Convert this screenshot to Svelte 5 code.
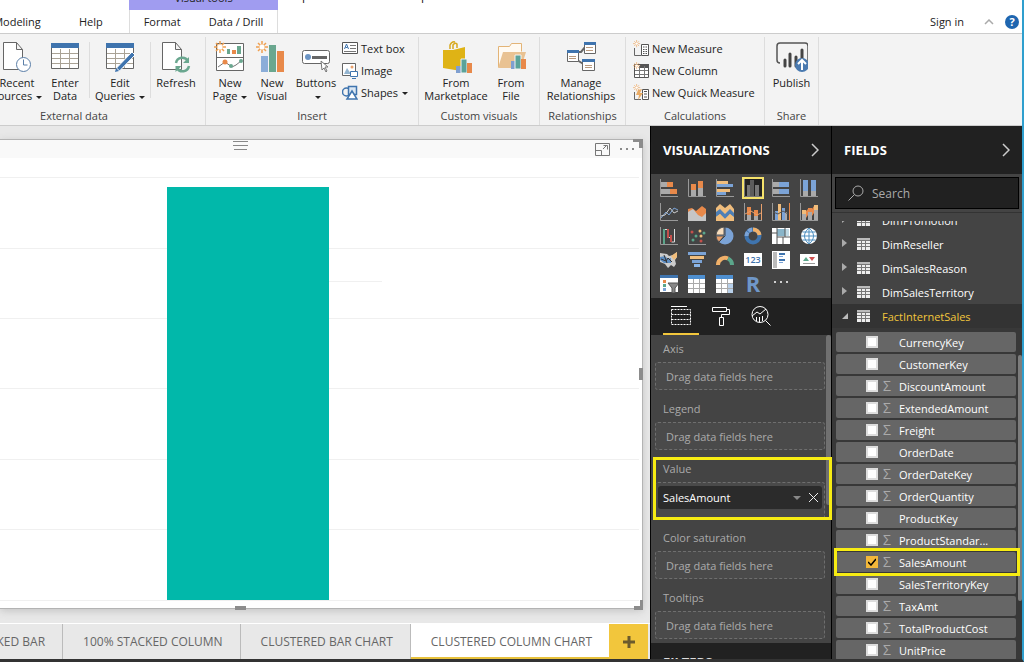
<script>
  let search = $state("");
  let activePage = $state("CLUSTERED COLUMN CHART");
  let activeVisual = $state("clusteredColumn");

  const pages = ["100% STACKED BAR", "100% STACKED COLUMN", "CLUSTERED BAR CHART", "CLUSTERED COLUMN CHART"];
  const tables = ["DimPromotion", "DimReseller", "DimSalesReason", "DimSalesTerritory"];

  let fields = $state([
    { name: "CurrencyKey", sum: false, checked: false },
    { name: "CustomerKey", sum: false, checked: false },
    { name: "DiscountAmount", sum: true, checked: false },
    { name: "ExtendedAmount", sum: true, checked: false },
    { name: "Freight", sum: true, checked: false },
    { name: "OrderDate", sum: false, checked: false },
    { name: "OrderDateKey", sum: true, checked: false },
    { name: "OrderQuantity", sum: true, checked: false },
    { name: "ProductKey", sum: false, checked: false },
    { name: "ProductStandar...", sum: true, checked: false },
    { name: "SalesAmount", sum: true, checked: true },
    { name: "SalesTerritoryKey", sum: false, checked: false },
    { name: "TaxAmt", sum: true, checked: false },
    { name: "TotalProductCost", sum: true, checked: false },
    { name: "UnitPrice", sum: true, checked: false },
  ]);

  const wells = [
    { label: "Axis" },
    { label: "Legend" },
    { label: "Value", field: "SalesAmount" },
    { label: "Color saturation" },
    { label: "Tooltips" },
  ];

  const axis = '<path d="M.5 0V17.500H18" fill="none" stroke="#999"/>';
  const o = "#e8894a";
  const b = "#7ba3d6";
  const g = "#aaa";
  const y = "#f0bd7c";
  const r = (x, y, w, h, c) => `<rect x="${x}" y="${y}" width="${w}" height="${h}" fill="${c}"/>`;

  // every visual is drawn on an 18 x 18 grid
  const visuals = {
    stackedBar: axis + r(1, 3, 6, 5, g) + r(7, 3, 6, 5, o) + r(1, 10, 9, 5, g) + r(10, 10, 7, 5, o),
    stackedColumn: axis + r(3, 5, 5, 6, o) + r(3, 11, 5, 6, g) + r(10, 2, 5, 7, o) + r(10, 9, 5, 8, g),
    clusteredBar: axis + r(1, 2, 11, 3, y) + r(1, 5, 16, 3, b) + r(1, 10, 13, 3, y) + r(1, 13, 9, 3, b),
    clusteredColumn: '<path d="M.5 0V17.500H18" fill="none" stroke="#777"/>' + r(3, 6, 3, 11, "#777") + r(6, 1, 4, 16, "#5c5c5c") + r(11, 6, 4, 11, "#777"),
    fullBar: axis + r(1, 3, 6, 5, g) + r(7, 3, 10, 5, b) + r(1, 10, 6, 5, g) + r(7, 10, 10, 5, b),
    fullColumn: axis + r(3, 1, 5, 11, b) + r(3, 12, 5, 5, g) + r(11, 1, 5, 11, b) + r(11, 12, 5, 5, g),
    line: axis + '<path d="M1 15 6 9l3 3 5-7 4 2" fill="none" stroke="#7ba3d6"/><path d="M1 13 5 12 10 5l4 5 4-2" fill="none" stroke="#ccc"/>',
    area: '<path d="M0 6 4 5l4 3 6-5 4 3v12H0z" fill="#e8894a"/><path d="M0 9 5 6l5 6 4 2 4-4v8H0z" fill="#c6c6c6"/>',
    stackedArea: '<path d="M0 5 4 1l5 4 5-4 4 5v12H0z" fill="#f0bd7c"/><path d="m0 9 4-3 5 5 5-5 4 4v4l-4-3-5 5-5-5-4 3z" fill="#4e7fb5"/><path d="m0 14 4-3 5 5 5-5 4 4v3H0z" fill="#f0bd7c"/>',
    lineStacked: axis + r(3, 4, 4, 8, o) + r(3, 12, 4, 5, g) + r(10, 7, 4, 6, o) + r(10, 13, 4, 4, g) + '<path d="m1 11 6-3 6 4 4-2M17.500 1v16" fill="none" stroke="#e8a06c"/>',
    lineClustered: axis + r(3, 8, 3, 9, b) + r(6, 1, 3, 16, y) + r(10, 5, 3, 12, b) + r(13, 9, 2, 8, g) + '<path d="m1 9 5 2 5-3 5 3" fill="none" stroke="#555"/><path d="M17.500 0v17" stroke="#e8894a"/>',
    ribbon: axis + r(2, 7, 4, 10, g) + r(2, 7, 4, 4, y) + r(8, 5, 4, 12, g) + r(8, 5, 4, 4, o) + r(14, 2, 4, 15, g) + r(14, 2, 4, 5, y) + '<path d="m6 8 2-2v6l-2 3zM12 6l2-3v7l-2 3z" fill="#e8894a"/>',
    waterfall: axis + '<path d="M4.500 17V2.500H8v8h3.500V15h3V2" fill="none" stroke="#ddd"/>' + r(3, 2, 2, 15, "#5ba68b") + r(7, 2, 2, 9, "#c5504b") + r(10, 8, 2, 7, "#c5504b"),
    scatter: axis + '<g fill="#c5504b"><circle cx="4" cy="5" r="1.500"/><circle cx="13" cy="14" r="1.500"/></g><g fill="#5ba68b"><circle cx="8" cy="9" r="1.500"/><circle cx="16" cy="6" r="1.500"/><circle cx="5" cy="13" r="1.500"/></g><g fill="#f0bd7c"><circle cx="12" cy="4" r="1.500"/><circle cx="13" cy="9" r="1.500"/></g>',
    pie: '<circle cx="9" cy="9" r="8.500" fill="#7ba3d6"/><path d="M8 8V0A8.500 8.500 0 0 0 0 8z" fill="#f7dcbc" stroke="#555"/><path d="M8 9H0a8.500 8.500 0 0 0 3 6z" fill="#e8a06c" stroke="#555"/><path d="M9 0v9l-6 6" fill="none" stroke="#444"/>',
    donut: '<circle cx="9" cy="9" r="6.500" fill="none" stroke="#3f74ae" stroke-width="4"/><path d="M9 2.500A6.500 6.500 0 0 1 15.500 8" fill="none" stroke="#f0b069" stroke-width="4"/><path d="M2.500 9A6.500 6.500 0 0 1 9 2.500" fill="none" stroke="#7ba3d6" stroke-width="4" stroke-dasharray="4 1"/>',
    treemap: r(0, 1, 18, 16, "#fff") + r(5, 2, 8, 7, "#8ab5c9") + r(13, 2, 4, 7, "#c1dae5") + '<path d="M5 1v16M0 6h5M5 10h13M11 10v7M13 1v9" fill="none" stroke="#555"/>',
    map: '<circle cx="9" cy="9" r="8" fill="#fff"/><path d="M1 9h16M2.500 5h13M2.500 13h13M9 1v16M9 1C3 6 3 12 9 17M9 1c6 5 6 11 0 16" fill="none" stroke="#4e8fc0"/>',
    filledMap: '<path d="M0 2 7 3l2 2 4-1 4-3v5l-2 3 1 4-2 3-3-2-3 3-3-4-5-2z" fill="#ccc"/><path d="m0 6 5-1 3 3 3-1v5H4L0 9z" fill="#5d8dc2"/><path d="m11 5 6-4v5l-3 3z" fill="#f0bd7c"/><path d="m1 8 5 2 2-3 4 4M4 4l3 8" fill="none" stroke="#333"/>',
    funnel: r(0, 1, 18, 3, b) + r(2, 5, 14, 3, y) + r(4, 9, 10, 3, b) + r(6, 13, 6, 3, "#8ab5e8"),
    gauge: '<path d="M2 14a7 7 0 0 1 10-6.500" fill="none" stroke="#f0b069" stroke-width="4"/><path d="M12 7.500A7 7 0 0 1 16 14" fill="none" stroke="#5ba68b" stroke-width="4"/>',
    card: r(0, 2, 18, 13, "#fff") + '<text x="9" y="12" text-anchor="middle" font-size="9" font-weight="600" fill="#3f74ae">123</text>',
    multiCard: r(0, 0, 18, 18, "#fff") + r(1, 1, 4, 16, "#bbb") + r(7, 2, 6, 2, "#3f74ae") + r(7, 5, 4, 1, b) + r(7, 8, 6, 2, "#3f74ae") + r(7, 11, 4, 1, b),
    kpi: r(0, 3, 18, 12, "#fff") + '<path d="m3 10 3-4 3 4z" fill="#5ba68b"/><path d="m9 6h6l-3 4z" fill="#d05050"/>' + r(3, 12, 12, 1, "#999"),
    slicer: r(0, 0, 18, 17, "#fff") + r(0, 0, 18, 3, "#3f74ae") + r(3, 5, 3, 3, o) + r(3, 9, 3, 3, "#5ba68b") + r(3, 13, 3, 3, b) + '<path d="M8 8h11l-4 5v5h-3v-5z" fill="#888" stroke="#555"/>',
    table: r(0, 0, 17, 18, "#fff") + r(0, 0, 17, 4, "#4e8fd0") + '<path d="M5.500 4v14M11.500 4v14M0 8.500h17M0 13.500h17" stroke="#aaa"/>',
    matrix: r(0, 0, 17, 18, "#fff") + r(0, 0, 17, 4, "#4e8fd0") + r(11, 8, 6, 10, "#b8d0ea") + '<path d="M5.500 4v14M11.500 4v14M0 8.500h17M0 13.500h17" stroke="#aaa"/>',
    rScript: '<text x="9" y="17" text-anchor="middle" font-size="22" font-weight="700" fill="#6f97c8">R</text>',
    more: '<g fill="#fff"><circle cx="3" cy="7" r="1"/><circle cx="9" cy="7" r="1"/><circle cx="15" cy="7" r="1"/></g>',
  };

  const spark = '<path d="M6 0v12M0 6h12M2 2l8 8M10 2l-8 8" stroke="#f0a050" fill="none"/><circle cx="6" cy="6" r="2" fill="#fff"/>';
  const page = '<path d="M2.500 1.500h13l6 7v20h-19zM15.500 1.500v7h6" fill="#fff" stroke="#666"/>';
  const grid = '<path d="M2.500 2.500h27v25h-27z" fill="#fff" stroke="#666"/><path d="M3 12.500h26M3 17.500h26M3 22.500h26M11.500 8v19M20.500 8v19" stroke="#a9a295"/><path d="M2 2h28v5H2z" fill="#3f74ae"/>';
  const sparkBig = '<path d="M6 0v12M0 6h12M2 2l8 8M10 2l-8 8" stroke="#f0a050" stroke-width="1.500" fill="none"/><circle cx="6" cy="6" r="2.500" fill="#fff"/>';

  // ribbon icons, 32 x 32
  const icons = {
    recent: page + '<circle cx="22.500" cy="23.500" r="7" fill="#fff" stroke="#5b7fa8"/><path d="M22.500 18.500v5.500h4" fill="none" stroke="#5b7fa8"/>',
    enter: grid,
    edit: grid + '<path d="M12.500 27 28 11l3 3-15.500 16z" fill="#3f74ae" stroke="#fff"/><path d="m12 27-1 4 4-1z" fill="#3f74ae"/>',
    refresh: page + '<path d="M16 22a6.500 6.500 0 0 1 12-2M29 25a6.500 6.500 0 0 1-12 2" fill="none" stroke="#6aa78f" stroke-width="2.500"/><path d="M29 16v6h-6zM15.500 31v-6h6z" fill="#6aa78f"/>',
    newPage: '<path d="M2.500 2.500h27v27h-27zM2 16.500h28" fill="#fff" stroke="#666"/>' + '<path d="M13 8h3v5h-3zM23 5h4v8h-4z" fill="#6aa78f"/><path d="M18 9h4v4h-4z" fill="#e8894a"/><path d="m4 26 7-5 7 5 4-2 5-4" fill="none" stroke="#777"/><g fill="#6aa78f"><circle cx="17" cy="25" r="2"/><circle cx="27" cy="20" r="2"/></g><circle cx="11" cy="21" r="2.500" fill="#e8894a"/>' + sparkBig,
    newVisual: '<path d="M5 15h7v16H5z" fill="#8badd8"/><path d="M13 4h7v27h-7z" fill="#6aa78f"/><path d="M21 10h7v21h-7z" fill="#e8894a"/>' + sparkBig,
    buttons: '<rect x="2.500" y="9.500" width="27" height="13" rx="2" fill="#fff" stroke="#666"/><circle cx="8" cy="16" r="3" fill="#6b94c4"/><path d="M12 15h15v3H12z" fill="#666"/><path d="m21 20 1 9 2-2 2 4 1-1-2-4h3z" fill="#fff" stroke="#777"/>',
    marketplace: '<path d="M10 8V4q2-4 5-3M13 8V4q2-3 4-1v4" fill="none" stroke="#d7a91f" stroke-width="1.500"/><path d="m3 9 10 0 12-3v22l-4 2-18-3z" fill="#dfb315"/><path d="M16 25h6v7h-6z" fill="#7f9fd0"/><path d="M21 18h6v14h-6z" fill="#5ba39a" stroke="#f3f3f3"/><path d="M27 22h5v10h-5z" fill="#e8894a"/>',
    file: '<path d="M3.500 26V5.500h11l2-3h10v8" fill="#fffaf2" stroke="#e3b477"/><path d="m3 27 5-16h23l-5 16z" fill="#e9c292"/><path d="M16 20h5v8h-5z" fill="#7f9fd0"/><path d="M20 14h6v14h-6z" fill="#5ba39a" stroke="#f3f3f3"/><path d="M26 18h5v10h-5z" fill="#e8894a"/>',
    manage: '<path d="M12 11h4l5-6M12 19l8 5" fill="none" stroke="#666" stroke-width="2"/><g fill="#fff" stroke="#666"><path d="M2.500 9.500h11v11h-11z"/><path d="M19.500 1.500h11v11h-11z"/><path d="M17.500 18.500h12v11h-12z"/></g><path d="M2 9h12v3H2zM19 1h12v3H19zM17 18h13v3H17z" fill="#3f74ae"/><path d="M4 15.500h7M4 17.500h7M21 6.500h7M21 9.500h7M20 24.500h7M20 26.500h7" stroke="#b99a7e"/>',
    publish: '<path d="M4 22q-3 0-3-3V5q0-3 3-3h25q3 0 3 3v15" fill="none" stroke="#555" stroke-width="1.500"/><path d="M9 19v6M14 13v12M20 16v9M26 9v10" stroke="#444" stroke-width="3" stroke-linecap="round"/><circle cx="26" cy="24" r="7" fill="#4a7ab0"/><path d="M26 29v-9M22 23l4-4 4 4" fill="none" stroke="#fff" stroke-width="2"/>',
  };

  // ribbon icons, 16 x 17
  const smallIcons = {
    textBox: '<path d="M.500 2.500h15v11H.500z" fill="#fff" stroke="#555"/><path d="m2.500 9 2-5 2 5M3.500 7.500h2" fill="none" stroke="#3f74ae"/><path d="M8 5.500h6M8 8.500h6M2 11.500h12" stroke="#777"/>',
    image: '<path d="M.500 1.500h13v12H.500z" fill="#fff" stroke="#666"/><path d="m2 12 3-6 4 6z" fill="#93b4cf"/><circle cx="10" cy="5" r="1.500" fill="#e8a06c"/><path d="M8.500 9.500h7v5h-7zM10 16.500h4" fill="#fff" stroke="#3f74ae"/>',
    shapes: '<circle cx="4.500" cy="8" r="4" fill="none" stroke="#3f74ae" stroke-width="1.500"/><path d="M6.500 2.500h8v8h-8z" fill="#dbe7f3" stroke="#3f74ae" stroke-width="1.500"/><path d="m10 7 5 8H5z" fill="#fff" stroke="#3f74ae" stroke-width="1.500"/>',
    measure: '<path d="M1.500 8v7.500H8" fill="none" stroke="#666"/><path d="M8.500 4.500h7v11h-7z" fill="#fff" stroke="#555"/><path d="M10 7h4M10 9.500h4M10 11.500h4M10 13.500h4" stroke="#555" stroke-dasharray="1 .500"/><g transform="scale(.600)">' + spark + "</g>",
    column: '<path d="M1.500 2.500h14v13h-14z" fill="#fff" stroke="#555"/><path d="M7 2h9v4H7z" fill="#555"/><path d="M6.500 4v11M11.500 4v11M2 8.500h13M2 12.500h13" stroke="#777"/><g transform="scale(.600)">' + spark + "</g>",
    quick: '<path d="M1.500 8v7.500H8" fill="none" stroke="#666"/><path d="M9.500 5.500h6v10h-6z" fill="#fff" stroke="#555"/><path d="M11 7.500h3M11 10h3M11 13h3" stroke="#555"/><path d="m5 6 4-1-2 4h3l-5 7 1-5H3z" fill="#e9ab65"/><g transform="scale(.600)">' + spark + "</g>",
  };
</script>

{#snippet big(icon, lines, arrow = false, width = 48)}
  <button class="big" style="width: {width}px">
    <svg viewBox="0 0 32 32">{@html icons[icon]}</svg>
    {#each lines as line, i}
      <span>{line}{#if arrow && i === lines.length - 1}<i class="caret"></i>{/if}</span>
    {/each}
  </button>
{/snippet}

{#snippet small(icon, text, arrow = false)}
  <button class="small">
    <svg viewBox="0 0 16 17">{@html smallIcons[icon]}</svg>
    <span>{text}{#if arrow}<i class="caret"></i>{/if}</span>
  </button>
{/snippet}

{#snippet tableIcon()}
  <svg class="table-icon" viewBox="0 0 13 12"><path d="M0 0h13v12H0z" fill="#eee" /><path d="M0 0h13v2H0z" fill="#bbb" /><path d="M0 2.500h13M0 5.500h13M0 8.500h13M4.500 2v10M8.500 2v10" stroke="#777" /></svg>
{/snippet}

<div class="app">
  <header>
    <nav class="tabs">
      <button class="modeling">Modeling</button>
      <button class="help-tab">Help</button>
    </nav>
    <div class="tools">
      <div class="tools-title"><span>Visual tools</span></div>
      <div class="tools-tabs">
        <button>Format</button>
        <button>Data / Drill</button>
      </div>
    </div>
    <div class="title"><span>ple - Power BI Desktop</span></div>
    <div class="account">
      <a href="#signin">Sign in</a>
      <button class="collapse" aria-label="Collapse ribbon">
        <svg viewBox="0 0 10 6"><path d="m1 5 4-4 4 4" fill="none" stroke="#aaa" stroke-width="1.500" /></svg>
      </button>
      <button class="help" aria-label="Help">?</button>
    </div>
  </header>

  <div class="ribbon">
    <section class="group external">
      <div class="items">
        {@render big("recent", ["Recent", "Sources"], true)}
        {@render big("enter", ["Enter", "Data"])}
        <i class="sep"></i>
        {@render big("edit", ["Edit", "Queries"], true, 60)}
        <i class="sep"></i>
        {@render big("refresh", ["Refresh"], false, 50)}
      </div>
      <h2>External data</h2>
    </section>
    <section class="group insert">
      <div class="items">
        {@render big("newPage", ["New", "Page"], true, 42)}
        {@render big("newVisual", ["New", "Visual"], false, 42)}
        {@render big("buttons", ["Buttons", ""], true, 46)}
        <div class="stack">
          {@render small("textBox", "Text box")}
          {@render small("image", "Image")}
          {@render small("shapes", "Shapes", true)}
        </div>
      </div>
      <h2>Insert</h2>
    </section>
    <section class="group custom">
      <div class="items">
        {@render big("marketplace", ["From", "Marketplace"], false, 66)}
        {@render big("file", ["From", "File"], false, 44)}
      </div>
      <h2>Custom visuals</h2>
    </section>
    <section class="group relationships">
      <div class="items">{@render big("manage", ["Manage", "Relationships"], false, 76)}</div>
      <h2>Relationships</h2>
    </section>
    <section class="group calculations">
      <div class="items">
        <div class="stack">
          {@render small("measure", "New Measure")}
          {@render small("column", "New Column")}
          {@render small("quick", "New Quick Measure")}
        </div>
      </div>
      <h2>Calculations</h2>
    </section>
    <section class="group share">
      <div class="items">{@render big("publish", ["Publish"])}</div>
      <h2>Share</h2>
    </section>
  </div>

  <main>
    <div class="report">
      <div class="canvas">
        <div class="visual">
          <div class="visual-head">
            <i class="grip"></i>
            <button aria-label="Focus mode">
              <svg class="focus" viewBox="0 0 15 13"><path d="M.500 .500h14v12H.500zM.500 7.500h6v5M8 6l4-4M8.500 2.500h4v4" fill="none" stroke="#777" /></svg>
            </button>
            <button aria-label="More options">
              <svg class="dots" viewBox="0 0 16 4"><circle cx="2" cy="2" r="1" /><circle cx="8" cy="2" r="1" /><circle cx="14" cy="2" r="1" /></svg>
            </button>
          </div>
          <svg class="chart" role="img" aria-label="SalesAmount column">
            {#each [19, 90, 160, 230, 301, 371, 442] as gy}
              <rect x="0" y={gy} width="639" height="1" fill="#f0f0f0" />
            {/each}
            <rect x="329" y="123" width="53" height="1" fill="#f0f0f0" />
            <rect x="167" y="29" width="162" height="413" fill="#01b8aa" />
          </svg>
          <i class="handle corner-top"></i>
          <i class="handle side"></i>
          <i class="handle corner-bottom"></i>
          <i class="handle bottom"></i>
        </div>
      </div>
      <nav class="pages">
        {#each pages as name}
          <button class:active={activePage === name} onclick={() => (activePage = name)}>{name}</button>
        {/each}
        <button class="add" aria-label="New page">
          <svg viewBox="0 0 12 12"><path d="M6 0v12M0 6h12" stroke="#6b5a2c" stroke-width="3" /></svg>
        </button>
      </nav>
    </div>

    <aside class="viz">
      <div class="pane-head">
        <h1>VISUALIZATIONS</h1>
        <button aria-label="Collapse visualizations"><svg viewBox="0 0 8 14"><path d="m1 1 6 6-6 6" /></svg></button>
      </div>
      <div class="gallery">
        {#each Object.entries(visuals) as [name, shape]}
          <button class:selected={activeVisual === name} aria-label={name} onclick={() => (activeVisual = name)}>
            <svg viewBox="0 0 18 18">{@html shape}</svg>
          </button>
        {/each}
      </div>
      <div class="pane-tabs">
        <button class="active" aria-label="Fields">
          <svg viewBox="0 0 22 22"><path d="M1 1.500h16" /><path d="M1.500 4.500h19v15h-19zM1.500 9.500h19M1.500 14.500h19" stroke-dasharray="2 1" /></svg>
        </button>
        <button aria-label="Format">
          <svg viewBox="0 0 22 22"><path d="M2.500 2.500h14v4h-14zM16.500 4.500h3v5h-8v3M9.500 12.500h4v8h-4z" /></svg>
        </button>
        <button aria-label="Analytics">
          <svg viewBox="0 0 22 22"><circle cx="10" cy="9.500" r="8" /><path d="m15.500 15.500 5 5M2 11l5-4 3 2 6-5M6.500 16v-4M9.500 17v-5M12.500 16v-5" /></svg>
        </button>
      </div>
      <div class="wells">
        {#each wells as well}
          <div class="well-row">
            <h3>{well.label}</h3>
            {#if well.field}
              <div class="well filled">
                <div class="chip">
                  <span>{well.field}</span>
                  <button aria-label="Field options"><i class="caret"></i></button>
                  <button aria-label="Remove field"><svg viewBox="0 0 9 9"><path d="m0 0 9 9M9 0 0 9" stroke="#eee" /></svg></button>
                </div>
              </div>
              <i class="mark"></i>
            {:else}
              <div class="well">Drag data fields here</div>
            {/if}
          </div>
        {/each}
        <div class="filters"><h1>FILTERS</h1></div>
        <i class="thumb"></i>
      </div>
    </aside>

    <aside class="fields">
      <div class="pane-head">
        <h1>FIELDS</h1>
        <button aria-label="Collapse fields"><svg viewBox="0 0 8 14"><path d="m1 1 6 6-6 6" /></svg></button>
      </div>
      <label class="search">
        <svg viewBox="0 0 16 16"><circle cx="10" cy="6" r="5" /><path d="M6.500 9.500.500 15.500" /></svg>
        <input type="text" placeholder="Search" aria-label="Search" bind:value={search} />
      </label>
      <div class="tree">
        <div class="tables">
          {#each tables as name}
            <button class="table-row">
              <svg class="arrow" viewBox="0 0 6 10"><path d="m0 0 5 4-5 4z" fill="#aaa" /></svg>
              {@render tableIcon()}
              <span>{name}</span>
            </button>
          {/each}
          <button class="table-row open">
            <svg class="arrow" viewBox="0 0 6 10"><path d="M6 2v6H0z" fill="#bbb" /></svg>
            {@render tableIcon()}
            <span>FactInternetSales</span>
          </button>
        </div>
        <div class="field-list">
          {#each fields as field}
            <label class="field" class:marked={field.name === "SalesAmount"}>
              <input type="checkbox" bind:checked={field.checked} />
              <span class="sigma">{field.sum ? "Σ" : ""}</span>
              <span>{field.name}</span>
            </label>
          {/each}
        </div>
        <i class="thumb"></i>
      </div>
    </aside>
  </main>
</div>

<style>
  :global(body) {
    overflow: hidden;
  }

  .app {
    box-sizing: border-box;
    display: flex;
    flex-direction: column;
    height: 100vh;
    overflow: hidden;
    border-right: 2px solid #2f9fce;
    border-bottom: 3px solid #333;
    background: #fff;
    color: #222;
    font-family: "Open Sans", "Noto Sans", sans-serif;
    font-size: 11px;
  }

  button {
    padding: 0;
    border: 0;
    background: none;
    color: inherit;
    font: inherit;
  }

  h1,
  h2,
  h3 {
    margin: 0;
    font-weight: 400;
  }

  svg {
    display: block;
  }

  .caret {
    display: inline-block;
    margin-left: 4px;
    border: 3px solid transparent;
    border-top-color: currentColor;
    border-bottom: 0;
    vertical-align: middle;
  }

  header {
    display: flex;
    flex: none;
    height: 33px;
    overflow: hidden;
    border-bottom: 1px solid #ccc;
  }

  .tabs {
    display: flex;
    flex: none;
    width: 129px;
    padding-top: 10px;
    box-sizing: border-box;
  }

  .modeling {
    width: 52px;
    margin-left: -9px;
  }

  .help-tab {
    margin-left: 36px;
  }

  .tools {
    width: 149px;
    flex: none;
  }

  .tools-title {
    height: 10px;
    display: flex;
    justify-content: center;
    align-items: flex-end;
    background: #a09cf0;
  }

  .tools-title span,
  .title span {
    line-height: 16px;
    margin-bottom: 4px;
  }

  .tools-tabs {
    display: flex;
    height: 23px;
    box-sizing: border-box;
    border: solid #ddd;
    border-width: 0 1px;
    justify-content: center;
    gap: 28px;
  }

  .title {
    height: 10px;
    display: flex;
    align-items: flex-end;
    padding-left: 24px;
    font-size: 12px;
  }

  .title span {
    margin-bottom: 6px;
  }

  .account {
    display: flex;
    align-items: center;
    gap: 20px;
    margin-left: auto;
    padding: 10px 3px 0 0;
  }

  .account a {
    color: inherit;
    text-decoration: none;
  }

  .collapse svg {
    width: 10px;
    height: 6px;
  }

  .help {
    width: 14px;
    height: 14px;
    margin-left: -9px;
    border-radius: 50%;
    background: #1f66b0;
    color: #fff;
    font-weight: 700;
    line-height: 14px;
  }

  .ribbon {
    display: flex;
    flex: none;
    height: 91px;
    border-bottom: 1px solid #ccc;
    background: #f3f3f3;
  }

  .group {
    display: flex;
    flex: none;
    flex-direction: column;
    box-sizing: border-box;
    margin-top: 3px;
    border-right: 1px solid #ddd;
  }

  .group h2 {
    color: #444;
    font-size: 11px;
    line-height: 14px;
    text-align: center;
  }

  .items {
    display: flex;
    flex: none;
    height: 72px;
  }

  .external {
    width: 263px;
    margin-left: -57px;
  }

  .external .items {
    justify-content: flex-end;
    padding-right: 4px;
  }

  .insert {
    width: 213px;
  }

  .insert .items,
  .relationships .items {
    padding-left: 3px;
  }

  .custom {
    width: 121px;
  }

  .custom .items,
  .calculations .items {
    padding-left: 4px;
  }

  .relationships {
    width: 86px;
  }

  .calculations {
    width: 139px;
  }

  .share {
    width: 54px;
  }

  .share .items {
    justify-content: center;
  }

  .sep {
    width: 1px;
    height: 56px;
    margin-top: 5px;
    background: #ddd;
  }

  .big {
    display: flex;
    flex: none;
    flex-direction: column;
    align-items: center;
    line-height: 13px;
    padding-top: 4px;
    white-space: nowrap;
  }

  .big svg {
    width: 32px;
    height: 32px;
    margin-bottom: 3px;
  }

  .stack {
    display: flex;
    flex-direction: column;
    padding-left: 3px;
  }

  .small {
    display: flex;
    align-items: center;
    gap: 3px;
    height: 22px;
    white-space: nowrap;
  }

  .small svg {
    width: 16px;
    height: 17px;
  }

  main {
    display: flex;
    flex: 1;
    min-height: 0;
  }

  .report {
    display: flex;
    flex: 1;
    flex-direction: column;
    min-width: 0;
    background: #e8e8e8;
  }

  .canvas {
    display: flex;
    flex: 1;
    padding: 13px 7px 14px 0;
  }

  .visual {
    position: relative;
    display: flex;
    flex: 1;
    flex-direction: column;
    border: solid #b3b3b3;
    border-width: 1px 1px 1px 0;
    background: #fff;
    box-shadow: 0 2px 8px #c4c4c4;
  }

  .visual-head {
    display: flex;
    align-items: center;
    justify-content: flex-end;
    gap: 9px;
    height: 18px;
    padding-right: 7px;
    background: #f9f9f9;
  }

  .grip {
    position: absolute;
    top: 1px;
    left: 233px;
    width: 15px;
    height: 3px;
    border: solid #888;
    border-width: 1px 0;
    box-shadow: 0 4px 0 -1px #f9f9f9, 0 5px 0 -1px #888;
  }

  .focus {
    width: 15px;
    height: 13px;
  }

  .dots {
    width: 16px;
    height: 4px;
    fill: #666;
  }

  .chart {
    flex: 1;
    width: 100%;
    min-height: 0;
  }

  .handle {
    position: absolute;
    box-sizing: border-box;
    border: 0 solid #8c8c8c;
  }

  .corner-top {
    top: -1px;
    right: -1px;
    width: 10px;
    height: 9px;
    border-width: 3px 4px 0 0;
  }

  .corner-bottom {
    right: -1px;
    bottom: -2px;
    width: 9px;
    height: 10px;
    border-width: 0 3px 4px 0;
  }

  .side {
    top: 228px;
    right: -1px;
    width: 4px;
    height: 12px;
    background: #8c8c8c;
  }

  .bottom {
    bottom: -2px;
    left: 235px;
    width: 11px;
    height: 4px;
    background: #8c8c8c;
  }

  .pages {
    display: flex;
    height: 35px;
    border-top: 1px solid #fff;
    padding-right: 2px;
    justify-content: flex-end;
    color: #666;
    font-size: 12px;
  }

  .pages button {
    flex: none;
    padding: 0 17px 0 20px;
    border-right: 1px solid #bbb;
    white-space: nowrap;
  }

  .pages .active {
    border-right: 0;
    background: #fff;
    box-shadow: inset 0 -2px #e8c23c;
  }

  .pages .add {
    display: grid;
    place-items: center;
    width: 39px;
    padding: 0;
    border: 0;
    background: #f2c63c;
  }

  .add svg {
    width: 12px;
    height: 12px;
  }

  aside {
    display: flex;
    flex: none;
    flex-direction: column;
    box-sizing: border-box;
    border-left: 1px solid #000;
    background: #444;
    color: #fff;
  }

  .pane-head {
    display: flex;
    flex: none;
    align-items: center;
    justify-content: space-between;
    height: 48px;
    padding: 0 12px;
    background: #212121;
  }

  h1 {
    font-size: 13px;
    font-weight: 700;
  }

  .pane-head svg {
    width: 8px;
    height: 14px;
    fill: none;
    stroke: #ccc;
    stroke-width: 1.5;
  }

  .viz {
    width: 181px;
  }

  .gallery {
    display: grid;
    flex: none;
    grid-template-columns: repeat(6, 28px);
    grid-auto-rows: 24px;
    padding: 2px 0 2px 4px;
  }

  .gallery button {
    display: grid;
    place-items: center;
    justify-self: center;
    align-self: center;
    width: 22px;
    height: 22px;
    box-sizing: border-box;
  }

  .gallery svg {
    width: 18px;
    height: 18px;
  }

  .gallery .selected {
    border: 2px solid #f5e26b;
    background: #222;
  }

  .pane-tabs {
    display: flex;
    flex: none;
    gap: 4px;
    height: 37px;
    padding-left: 12px;
    background: #212121;
  }

  .pane-tabs button {
    display: grid;
    place-items: center;
    width: 36px;
    box-sizing: border-box;
    border-bottom: 2px solid transparent;
  }

  .pane-tabs .active {
    border-color: #f2c63c;
  }

  .pane-tabs svg {
    width: 22px;
    height: 22px;
    fill: none;
    stroke: #fff;
  }

  .wells {
    position: relative;
    flex: 1;
    min-height: 0;
    color: #aaa;
  }

  .well-row {
    position: relative;
    margin: 0 6px 5px 4px;
  }

  .well-row h3 {
    padding-left: 8px;
    font-size: 11px;
    line-height: 27px;
  }

  .well {
    box-sizing: border-box;
    height: 28px;
    padding-left: 10px;
    border: 1px dashed #6e6e6e;
    border-radius: 3px;
    background: #4a4a4a;
    line-height: 27px;
  }

  .well.filled {
    height: 37px;
    padding: 3px 2px;
  }

  .chip {
    display: flex;
    align-items: center;
    gap: 8px;
    height: 23px;
    padding: 0 4px 0 5px;
    border-radius: 3px;
    background: #2b2b2b;
    color: #fff;
  }

  .chip span {
    margin-right: auto;
  }

  .chip .caret {
    display: block;
    margin: 0;
    border-width: 4px 4px 0;
    border-top-color: #888;
  }

  .chip svg {
    width: 9px;
    height: 9px;
  }

  .mark {
    position: absolute;
    z-index: 1;
    inset: 2px -7px -1px -2px;
    border: 3px solid #f7ec13;
  }

  .filters {
    height: 16px;
    margin-top: -1px;
    padding: 10px 0 0 12px;
    box-sizing: border-box;
    overflow: hidden;
    background: #212121;
    color: #ddd;
  }

  .wells .thumb {
    position: absolute;
    top: 0;
    right: 0;
    width: 5px;
    height: 170px;
    border-radius: 3px;
    background: #707070;
  }

  .fields {
    width: 191px;
  }

  .search {
    display: flex;
    flex: none;
    align-items: center;
    gap: 8px;
    height: 30px;
    margin: 3px 3px 3px 3px;
    padding: 0 12px;
    border: 1px solid #000;
    background: #212121;
  }

  .search svg {
    width: 16px;
    height: 16px;
    fill: none;
    stroke: #aaa;
  }

  .search input {
    flex: 1;
    min-width: 0;
    padding: 0;
    border: 0;
    outline: 0;
    background: none;
    color: #ccc;
    font: inherit;
    font-size: 12px;
  }

  .search input::placeholder {
    color: #aaa;
    opacity: 1;
  }

  .tree {
    position: relative;
    display: flex;
    flex: 1;
    flex-direction: column;
    min-height: 0;
    overflow: hidden;
    border-top: 1px solid #333;
  }

  .tables {
    display: flex;
    flex: none;
    flex-direction: column;
    justify-content: flex-end;
    height: 107px;
    margin-top: 8px;
    overflow: hidden;
  }

  .table-row {
    display: flex;
    flex: none;
    align-items: center;
    height: 24px;
    padding-left: 10px;
  }

  .table-row.open {
    background: #333;
    color: #f2c63c;
  }

  .arrow {
    width: 6px;
    height: 10px;
  }

  .table-icon {
    width: 13px;
    height: 12px;
    margin: 0 12px 0 9px;
  }

  .field-list {
    display: flex;
    flex-direction: column;
    gap: 2px;
    padding: 4px 6px 0 4px;
    background: #383838;
  }

  .field {
    position: relative;
    display: flex;
    flex: none;
    align-items: center;
    height: 20px;
    padding-left: 30px;
    border-radius: 2px;
    background: #666;
  }

  .marked::after {
    content: "";
    position: absolute;
    z-index: 1;
    inset: -4px -4px -4px -2px;
    border: 3px solid #f7ec13;
    pointer-events: none;
  }

  .field input {
    appearance: none;
    width: 12px;
    height: 12px;
    margin: 0;
    border: 2px solid #ddd;
    background: #fff;
  }

  .field input:checked {
    border-color: #f2b73a;
    background: #f2b73a url('data:image/svg+xml,<svg xmlns="http://www.w3.org/2000/svg" viewBox="0 0 8 8"><path d="m0 4 3 3 5-6" fill="none" stroke="black" stroke-width="1.500"/></svg>');
  }

  .sigma {
    width: 21px;
    padding-left: 5px;
    box-sizing: border-box;
    color: #aaa;
    font-size: 14px;
    line-height: 20px;
  }

  .tree .thumb {
    position: absolute;
    top: 142px;
    right: 0;
    width: 4px;
    height: 246px;
    border-radius: 2px;
    background: #7c7c7c;
  }
</style>
